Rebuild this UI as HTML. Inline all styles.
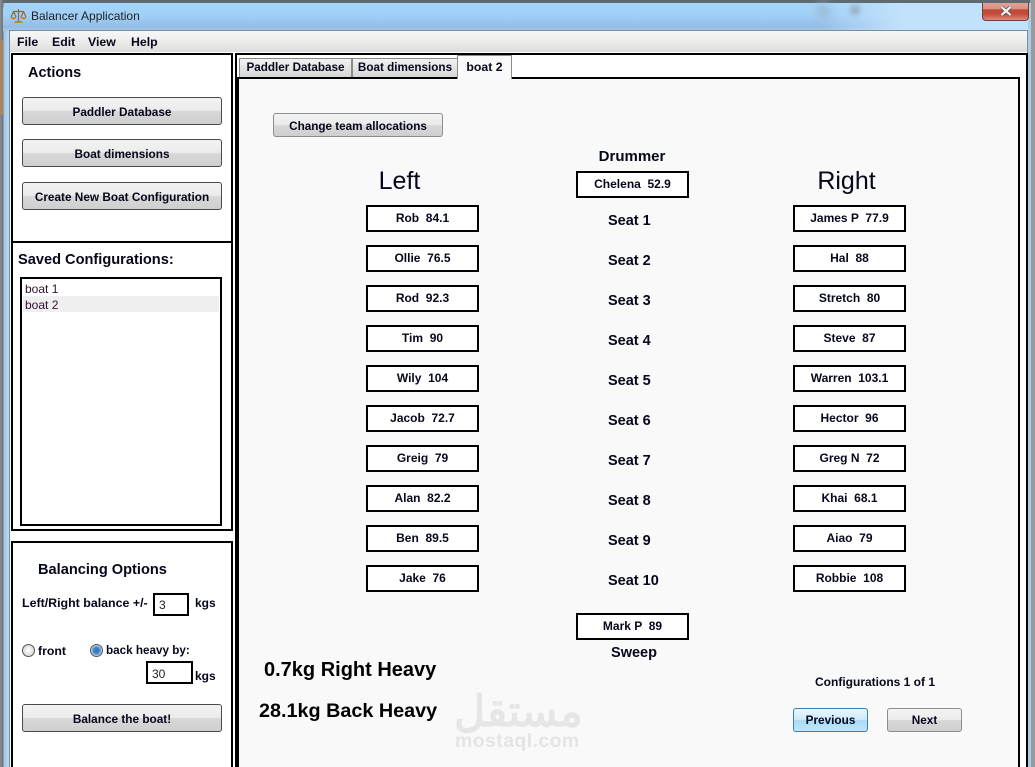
<!DOCTYPE html>
<html style="overflow:hidden;height:767px"><head><meta charset="utf-8"><style>
html,body{margin:0;padding:0}
body{width:1035px;height:767px;overflow:hidden;position:relative;background:#fff;font-family:"Liberation Sans",sans-serif;color:#000}
div,span{position:absolute;box-sizing:border-box}
#root{left:0;top:0;width:1035px;height:767px;overflow:hidden}
.t{white-space:nowrap;font-weight:bold;font-size:12.5px;line-height:16px;color:#05071a}
.c{text-align:center}
.b{height:28px;border:1px solid #4a4a4a;border-radius:3px;background:linear-gradient(#f3f3f3 0,#ebebeb 48%,#d8d8d8 52%,#cfcfcf 100%);text-align:center;font-weight:bold;font-size:11.8px;line-height:29px;color:#05071a;white-space:nowrap}
.g{border-color:#8d8d8d}
.x{width:113px;height:27px;border:2px solid #000;background:#fff;text-align:center;font-weight:bold;font-size:12px;line-height:23px;color:#05071a;white-space:pre}
.s{width:43px;text-align:left;font-weight:bold;font-size:14.5px;line-height:18px;white-space:nowrap;margin-top:1px;color:#05071a}
.p{border:2px solid #000;background:#fff}
.tab{top:58px;height:19px;background:linear-gradient(#f2f2f2,#d6d6d6);border:1px solid #8a8a8a;border-bottom:0;text-align:center;font-weight:bold;font-size:11.7px;line-height:18px;color:#05071a;white-space:nowrap}
</style></head><body><div id="root">
<div style="left:0;top:0;width:1035px;height:767px;background:linear-gradient(90deg,#8a8f93 0,#6d7378 3px,#a5c8e8 4px,#b8d9f6 9px)"></div>
<div style="left:0;top:40px;width:3px;height:75px;background:#a8865a"></div>
<div style="left:3px;top:0;width:1032px;height:3px;background:#5d6a70"></div>
<div style="left:3px;top:3px;width:1027px;height:28px;background:linear-gradient(#a6d5fa 0,#a0cff7 45%,#94bde4 85%,#a8c8e6 100%);border-radius:6px 6px 0 0"></div>
<div style="left:820px;top:3px;width:208px;height:28px;background:linear-gradient(90deg,rgba(190,225,250,0),#c2e2fb 40%)"></div>
<div style="left:815px;top:4px;width:16px;height:16px;border-radius:50%;background:#9dbfda;filter:blur(4px)"></div>
<div style="left:850px;top:5px;width:10px;height:10px;border-radius:50%;background:#93a8bb;filter:blur(3px)"></div>
<div style="left:1030px;top:0;width:5px;height:767px;background:#9a9a98"></div>
<div style="left:1028px;top:3px;width:3px;height:764px;background:#a9cdee"></div>
<div style="left:982px;top:3px;width:47px;height:18px;border:1px solid #6d4038;border-top:0;border-radius:0 0 4px 4px;background:linear-gradient(#e3a197 0,#dd8f83 35%,#bf4a37 40%,#c54c39 65%,#dc8c7a 100%)"></div>
<svg style="position:absolute;left:1000px;top:6px" width="12" height="10" viewBox="0 0 12 10"><path d="M1.500 1L10.500 9M10.500 1L1.500 9" stroke="#3d4a50" stroke-width="3.500" fill="none"/><path d="M1.500 1L10.500 9M10.500 1L1.500 9" stroke="#f2f2f2" stroke-width="2.200" fill="none"/></svg>
<svg style="position:absolute;left:10px;top:8px" width="17" height="16" viewBox="0 0 17 16"><path d="M8.500 1V13M3 3.500H14M3.500 3.500L1 9M3.500 3.500L6 9M13.500 3.500L11 9M13.500 3.500L16 9M5 14H12" stroke="#8a6a3a" stroke-width="1.200" fill="none"/><path d="M.5 9H6.500A3 2.500 0 0 1 .5 9ZM10.500 9H16.500A3 2.500 0 0 1 10.500 9ZM4 14H13V15H4Z" fill="#c98a35"/></svg>
<div class="t" style="left:31px;top:8px;font-weight:normal;font-size:12px;color:#222">Balancer Application</div>
<div style="left:9px;top:30px;width:1019px;height:737px;background:#fff;border:1px solid #7a8b9c;border-bottom:0"></div>
<div style="left:10px;top:31px;width:1017px;height:21px;background:linear-gradient(#f7f7f7,#f0f0f0 35%,#dedddb)"></div>
<div class="t" style="left:17px;top:34px;font-size:12.3px">File</div>
<div class="t" style="left:52px;top:34px;font-size:12.3px">Edit</div>
<div class="t" style="left:88px;top:34px;font-size:12.3px">View</div>
<div class="t" style="left:131px;top:34px;font-size:12.3px">Help</div>

<div class="p" style="left:11px;top:53px;width:222px;height:190px"></div>
<div class="p" style="left:11px;top:241px;width:222px;height:290px"></div>
<div class="p" style="left:11px;top:541px;width:222px;height:240px"></div>
<div class="t" style="left:28px;top:64px;font-size:14.500px;line-height:18px">Actions</div>
<div class="b" style="left:22px;top:97px;width:200px">Paddler Database</div>
<div class="b" style="left:22px;top:139px;width:200px">Boat dimensions</div>
<div class="b" style="left:22px;top:182px;width:200px">Create New Boat Configuration</div>
<div class="t" style="left:18px;top:251px;font-size:14.600px;line-height:18px">Saved Configurations:</div>
<div class="p" style="left:20px;top:277px;width:202px;height:249px"></div>
<div style="left:23px;top:296px;width:196px;height:16px;background:#efefef"></div>
<div class="t" style="left:25px;top:281px;font-weight:normal;font-size:12px;color:#301030">boat 1</div>
<div class="t" style="left:25px;top:297px;font-weight:normal;font-size:12px;color:#301030">boat 2</div>
<div class="t" style="left:38px;top:561px;font-size:14.600px;line-height:18px">Balancing Options</div>
<div class="t" style="left:22px;top:595px;font-size:12.400px">Left/Right balance +/-</div>
<div class="p" style="left:153px;top:593px;width:36px;height:23px"></div>
<div class="t" style="left:159px;top:597px;font-weight:normal;font-size:12px;color:#222">3</div>
<div class="t" style="left:195px;top:595px;font-size:12px">kgs</div>
<div style="left:22px;top:644px;width:13px;height:13px;border-radius:50%;border:1px solid #555;background:radial-gradient(#fff,#ccc)"></div>
<div class="t" style="left:38px;top:643px;font-size:12.300px">front</div>
<div style="left:90px;top:644px;width:13px;height:13px;border-radius:50%;border:1px solid #555;background:radial-gradient(#2e6fc0 0,#3f86d0 40%,#cfd6dc 70%)"></div>
<div class="t" style="left:106px;top:643px;font-size:11.700px">back heavy by:</div>
<div class="p" style="left:146px;top:661px;width:47px;height:23px"></div>
<div class="t" style="left:152px;top:666px;font-weight:normal;font-size:12px;color:#222">30</div>
<div class="t" style="left:195px;top:668px;font-size:12px">kgs</div>
<div class="b" style="left:22px;top:704px;width:200px">Balance the boat!</div>

<div class="p" style="left:235px;top:53px;width:793px;height:730px"></div>
<div style="left:237px;top:77px;width:783px;height:700px;background:#f9f9f9;border:2px solid #000"></div>
<div class="tab" style="left:239px;width:113px">Paddler Database</div>
<div class="tab" style="left:352px;width:106px">Boat dimensions</div>
<div class="tab" style="left:457px;top:55px;width:55px;height:24px;background:#f9f9f9;line-height:22px;border-bottom:0;font-size:12.300px">boat 2</div>
<div class="b g" style="left:273px;top:113px;width:170px;height:24px;line-height:25px;font-size:11.700px">Change team allocations</div>

<div class="t c" style="left:582px;top:148px;width:100px;font-size:15px;line-height:18px">Drummer</div>
<div class="t c" style="left:339.500px;top:166px;width:120px;font-weight:normal;font-size:25px;line-height:30px">Left</div>
<div class="t c" style="left:786.500px;top:166px;width:120px;font-weight:normal;font-size:25px;line-height:30px">Right</div>
<div class="x" style="left:576px;top:171px">Chelena  52.9</div>

<div class="x" style="left:366px;top:205px">Rob  84.1</div>
<div class="x" style="left:366px;top:245px">Ollie  76.5</div>
<div class="x" style="left:366px;top:285px">Rod  92.3</div>
<div class="x" style="left:366px;top:325px">Tim  90</div>
<div class="x" style="left:366px;top:365px">Wily  104</div>
<div class="x" style="left:366px;top:405px">Jacob  72.7</div>
<div class="x" style="left:366px;top:445px">Greig  79</div>
<div class="x" style="left:366px;top:485px">Alan  82.2</div>
<div class="x" style="left:366px;top:525px">Ben  89.5</div>
<div class="x" style="left:366px;top:565px">Jake  76</div>

<div class="s" style="left:608px;top:211px">Seat 1</div>
<div class="s" style="left:608px;top:251px">Seat 2</div>
<div class="s" style="left:608px;top:291px">Seat 3</div>
<div class="s" style="left:608px;top:331px">Seat 4</div>
<div class="s" style="left:608px;top:371px">Seat 5</div>
<div class="s" style="left:608px;top:411px">Seat 6</div>
<div class="s" style="left:608px;top:451px">Seat 7</div>
<div class="s" style="left:608px;top:491px">Seat 8</div>
<div class="s" style="left:608px;top:531px">Seat 9</div>
<div class="s" style="left:608px;top:571px">Seat 10</div>

<div class="x" style="left:793px;top:205px">James P  77.9</div>
<div class="x" style="left:793px;top:245px">Hal  88</div>
<div class="x" style="left:793px;top:285px">Stretch  80</div>
<div class="x" style="left:793px;top:325px">Steve  87</div>
<div class="x" style="left:793px;top:365px">Warren  103.1</div>
<div class="x" style="left:793px;top:405px">Hector  96</div>
<div class="x" style="left:793px;top:445px">Greg N  72</div>
<div class="x" style="left:793px;top:485px">Khai  68.1</div>
<div class="x" style="left:793px;top:525px">Aiao  79</div>
<div class="x" style="left:793px;top:565px">Robbie  108</div>

<div class="x" style="left:576px;top:613px">Mark P  89</div>
<div class="t c" style="left:584px;top:644px;width:100px;font-size:14.500px;line-height:18px">Sweep</div>

<div class="t" style="left:264px;top:658px;font-size:20px;line-height:24px;color:#000">0.7kg Right Heavy</div>
<div class="t" style="left:259px;top:699px;font-size:19.800px;line-height:24px;color:#000">28.1kg Back Heavy</div>

<div class="t" style="left:454px;top:688px;font-size:43px;line-height:48px;color:#e6e6e6;font-family:'Liberation Sans','Noto Sans CJK SC',sans-serif" dir="rtl">مستقل</div>
<div class="t" style="left:455px;top:730px;font-size:19.500px;line-height:22px;color:#e4e4e4;letter-spacing:.4px">mostaql.com</div>

<div class="t" style="left:815px;top:674px;font-size:12px">Configurations 1 of 1</div>
<div class="b" style="left:793px;top:708px;width:75px;height:24px;line-height:23px;border:1px solid #3c7fb1;background:linear-gradient(#e8f6fd,#cfeafb 48%,#a9dbf6 52%,#bfe5fa)">Previous</div>
<div class="b g" style="left:887px;top:708px;width:75px;height:24px;line-height:23px">Next</div>
</div></body></html>
